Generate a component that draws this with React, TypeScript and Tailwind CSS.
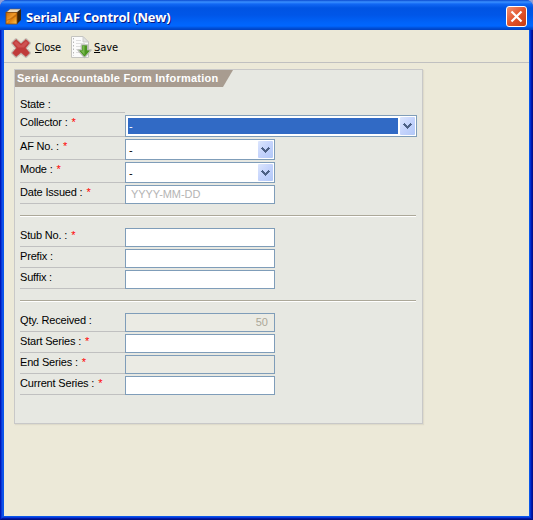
import React from "react";

const ARIAL = "font-['Liberation_Sans',Arial,sans-serif]";

function BoxIcon() {
  return (
    <svg width="17" height="17" viewBox="0 0 17 17" className="shrink-0">
      <defs>
        <linearGradient id="boxFront" x1="0" y1="0" x2="1" y2="1">
          <stop offset="0" stopColor="#c86808" />
          <stop offset="0.45" stopColor="#f09a28" />
          <stop offset="0.55" stopColor="#e08010" />
          <stop offset="1" stopColor="#ffc848" />
        </linearGradient>
      </defs>
      <path d="M1 4.500 L5 1 H16 L12 4.500 Z" fill="#ecdcc0" stroke="#6b5a4c" strokeWidth="0.6" />
      <path d="M12 4.500 L16 1 V12 L12 16 Z" fill="#3a2408" />
      <rect x="1" y="4.500" width="11" height="11.500" fill="url(#boxFront)" stroke="#8a4a08" strokeWidth="0.8" />
      <path d="M1.4 12 L5 10.500 L11.6 6 V8 L6 11.500 L1.400 13 Z" fill="#a85808" opacity="0.5" />
    </svg>
  );
}

function CrossIcon() {
  return (
    <svg width="22" height="22" viewBox="0 0 22 22" className="shrink-0">
      <path
        d="M6 2.500 L11 7 L16 2.500 L19.500 6 L15.500 11 L19.500 16 L16 19.500 L11 15.500 L6 19.500 L2.500 16 L6.500 11 L2.500 6 Z"
        fill="#c4c0b8"
        stroke="#c4c0b8"
        strokeWidth="3"
        strokeLinejoin="round"
      />
      <path
        d="M6 2.500 L11 7 L16 2.500 L19.500 6 L15.500 11 L19.500 16 L16 19.500 L11 15.500 L6 19.500 L2.500 16 L6.500 11 L2.500 6 Z"
        fill="#c03a3a"
        stroke="#c03a3a"
        strokeWidth="0.600"
        strokeLinejoin="round"
      />
      <path d="M6 4 L11 8.500 L16 4 L18 6 L14 10.500 H8 L4 6 Z" fill="#d45c5c" opacity="0.700" />
    </svg>
  );
}

function SaveIcon() {
  return (
    <svg width="22" height="25" viewBox="0 0 22 25" className="shrink-0">
      <path d="M1.500 1.500 H13 L18.500 7 V22.500 H1.500 Z" fill="#fbfbfb" stroke="#c4c4c0" />
      <path d="M13 1.500 V7 H18.500 Z" fill="#e2e2e2" stroke="#c8c8c4" strokeWidth="0.800" />
      <path d="M3.500 3 V21" stroke="#b8b8b8" strokeDasharray="1.500 2" />
      <path d="M6 5.500 H11 M6 8.500 H15 M6 11.500 H16 M6 14.500 H16 M6 17.500 H16" stroke="#dedede" />
      <path
        d="M11.500 10 H17.500 V15 H21 L14.500 22.500 L8 15 H11.500 Z"
        fill="#4e9a22"
        stroke="#b8bcb4"
        strokeWidth="1.600"
        strokeLinejoin="round"
      />
      <path d="M12 10.500 H17 V15.500 H19.800 L14.500 21.500 L9.200 15.500 H12 Z" fill="#4b9620" />
      <path d="M12.500 11 H14.500 V20 L11 16 H12.500 Z" fill="#79b850" />
    </svg>
  );
}

function DropButton() {
  return (
    <span className="flex h-full w-[15px] items-center justify-center rounded-[1px] bg-gradient-to-br from-[#dce6fd] via-[#c4d3fc] to-[#b2c8f8]">
      <svg width="9" height="6" viewBox="0 0 9 6" shapeRendering="crispEdges">
        <path
          d="M1 0h1v1h1v1h1v1h1v-1h1v-1h1v-1h1v1h1v1h-1v1h-1v1h-1v1h-1v1h-1v-1h-1v-1h-1v-1h-1v-1h-1v-1h1z"
          fill="#4d6185"
        />
      </svg>
    </span>
  );
}

type RowProps = { label: string; required?: boolean; size: string; children?: React.ReactNode };

function Row({ label, required, size, children }: RowProps) {
  return (
    <div className={`flex ${size}`}>
      <div className="w-[105px] shrink-0 whitespace-pre border-b border-[#c0c0c0] text-[11px] leading-[14px] tracking-[-0.18px] text-black">
        {label}
        {required && <span className="ml-[4px] text-[#ff0000]">*</span>}
      </div>
      {children}
    </div>
  );
}

function Field({ disabled, children }: { disabled?: boolean; children?: React.ReactNode }) {
  return (
    <div
      className={`w-[150px] border border-[#7f9db9] text-[11px] leading-[17px] ${
        disabled ? "bg-[#ebebe4] pr-[6px] text-right text-[#aca899]" : "bg-white pl-[5px] tracking-[-0.05px] text-[#b4b4b4]"
      }`}
    >
      {children}
    </div>
  );
}

function Combo() {
  return (
    <div className="flex w-[150px] border border-[#7f9db9] bg-white p-px">
      <span className="grow pl-[2px] text-[11px] leading-[18px]">-</span>
      <DropButton />
    </div>
  );
}

function Divider() {
  return <div className="h-[2px] w-[396px] border-t border-b border-t-[#aca899] border-b-white" />;
}

export default function App() {
  return (
    <div className={`flex h-[520px] w-[533px] flex-col bg-[#8f9fd8] ${ARIAL}`}>
      <div className="flex h-full flex-col overflow-hidden rounded-t-[7px] bg-[#0a3fdc]">
        <header className="flex h-[30px] shrink-0 items-center bg-[linear-gradient(180deg,#0a4ad0_0px,#3a90ff_2px,#1268f4_4px,#0054e3_8px,#0056e8_15px,#0064fa_23px,#0066ff_26px,#0050d8_28px,#0040c0_30px)] pl-[5px] pr-[6px] pt-[3px]">
          <BoxIcon />
          <h1 className="ml-[4px] grow whitespace-pre font-['Open_Sans',sans-serif] text-[13px] font-bold leading-[20px] tracking-[-0.22px] text-white [text-shadow:1px_1px_0_#0a1883]">
            Serial AF Control (New)
          </h1>
          <button className="flex size-[21px] items-center justify-center rounded-[3px] border border-white bg-gradient-to-br from-[#f09070] via-[#e2532b] to-[#c83c10]">
            <svg width="13" height="13" viewBox="0 0 13 13">
              <path d="M1.500 1.500 L11.500 11.500 M11.500 1.500 L1.500 11.500" stroke="white" strokeWidth="2.200" />
            </svg>
          </button>
        </header>
        <div className="flex grow border-x border-b border-b-[#001080] border-l-[#0018b8] border-r-[#001090]">
          <div className="flex grow border-x border-b border-b-[#0018a8] border-l-[#0838d8] border-r-[#0018b0]">
            <div className="flex grow border-x border-b border-b-[#0838d8] border-l-[#1050e8] border-r-[#0030d0]">
              <main className="grow border-x border-b border-[#0855ea] bg-[#ece9d8]">
                <nav className="flex h-[33px] items-center border-b border-[#c0c0c0] pl-[6px] pt-[3px] font-['DejaVu_Sans_Condensed','DejaVu_Sans',sans-serif] text-[11px] text-black">
                  <CrossIcon />
                  <span className="ml-[3px] w-[35px] pt-[2px] tracking-[-0.2px]">
                    <span className="underline underline-offset-1">C</span>lose
                  </span>
                  <SaveIcon />
                  <span className="ml-[2px] pt-[2px] tracking-[-0.1px]">
                    <span className="underline underline-offset-1">S</span>ave
                  </span>
                </nav>
                <section className="ml-[10px] mt-[6px] h-[355px] w-[409px] border border-[#c8c8c8] bg-[#e7e8e2] shadow-[1px_1px_1px_#dedbcb]">
                  <h2 className="h-[17px] w-[218px] whitespace-pre bg-[#a89c90] pl-[2px] text-[11px] font-bold leading-[16px] tracking-[0.25px] text-white [clip-path:polygon(0_0,100%_0,208px_100%,0_100%)]">
                    Serial Accountable Form Information
                  </h2>
                  <div className="flex flex-col gap-[2px] pl-[5px] pt-[10px]">
                    <Row label="State :" size="h-[16px]" />
                    <Row label="Collector :" required size="h-[22px]">
                      <div className="flex w-[292px] border border-[#7f9db9] bg-white py-px pr-px">
                        <span className="my-px ml-[2px] mr-[2px] grow bg-[#316ac5] pl-px text-[11px] leading-[16px] text-white">-</span>
                        <DropButton />
                      </div>
                    </Row>
                    <Row label="AF No. :" required size="h-[21px]"><Combo /></Row>
                    <Row label="Mode :" required size="h-[21px]"><Combo /></Row>
                    <Row label="Date Issued :" required size="h-[19px]"><Field>YYYY-MM-DD</Field></Row>
                  </div>
                  <div className="flex flex-col gap-[11px] pl-[5px] pt-[11px]">
                    <Divider />
                    <div className="flex flex-col gap-[2px]">
                      <Row label="Stub No. :" required size="h-[19px]"><Field /></Row>
                      <Row label="Prefix :" size="h-[19px]"><Field /></Row>
                      <Row label="Suffix :" size="h-[19px]"><Field /></Row>
                    </div>
                    <Divider />
                    <div className="flex flex-col gap-[2px]">
                      <Row label="Qty. Received :" size="h-[19px]"><Field disabled>50</Field></Row>
                      <Row label="Start Series :" required size="h-[19px]"><Field /></Row>
                      <Row label="End Series :" required size="h-[19px]"><Field disabled /></Row>
                      <Row label="Current Series :" required size="h-[19px]"><Field /></Row>
                    </div>
                  </div>
                </section>
              </main>
            </div>
          </div>
        </div>
      </div>
    </div>
  );
}
